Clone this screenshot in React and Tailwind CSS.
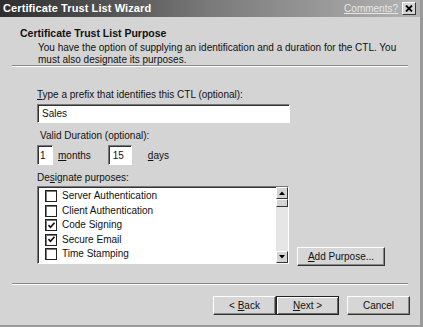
import React from "react";

const font = { fontFamily: '"Liberation Sans", Arial, sans-serif' };

function CheckBox({ checked }) {
  return (
    <span className="w-[12px] h-[12px] border border-[#222] shadow-[inset_1px_1px_0_#777] bg-white flex items-center justify-center shrink-0">
      {checked && (
        <svg width="9" height="9" viewBox="0 0 9 9">
          <path d="M1.5 4.2 L3.5 6.3 L7.5 1.8" stroke="#111" strokeWidth="1.7" fill="none" />
        </svg>
      )}
    </span>
  );
}

function Button({ children, def, className = "" }) {
  return (
    <div
      className={
        "h-[19px] flex items-center justify-center bg-[#d6d6d6] text-[10px] text-[#111] " +
        (def
          ? "border border-[#222] shadow-[inset_1px_1px_0_#fff,inset_-1px_-1px_0_#666] "
          : "border-t border-l border-t-[#fff] border-l-[#fff] border-r border-b border-r-[#333] border-b-[#333] shadow-[inset_-1px_-1px_0_#888] ") +
        className
      }
    >
      {children}
    </div>
  );
}

const sunken =
  "border-t border-l border-t-[#777] border-l-[#777] border-r border-b border-r-[#fff] border-b-[#fff] shadow-[inset_1px_1px_0_#333]";

export default function App() {
  const items = [
    ["Server Authentication", false],
    ["Client Authentication", false],
    ["Code Signing", true],
    ["Secure Email", true],
    ["Time Stamping", false],
    ["Microsoft Trust List Signing", false],
  ];
  return (
    <div
      className="w-[423px] h-[327px] bg-[#d4d4d4] flex flex-col overflow-hidden border-r-[3px] border-b-[2px] border-[#9a9a9a]"
      style={font}
    >
      <div className="h-[17px] shrink-0 flex items-center justify-between pl-[3px] pr-[4px] bg-gradient-to-r from-[#2e2e2e] via-[#7a7a7a] to-[#b4b4b4]">
        <span className="text-white font-bold text-[11px] tracking-[0.1px]">Certificate Trust List Wizard</span>
        <div className="flex items-center gap-[4px]">
          <span className="text-[10px] text-[#e8e8e8] underline">Comments?</span>
          <span className="w-[14px] h-[13px] bg-[#d4d4d4] border-t border-l border-white border-r border-b border-r-[#333] border-b-[#333] flex items-center justify-center">
            <svg width="8" height="7" viewBox="0 0 8 7">
              <path d="M1 0.5 L7 6.5 M7 0.5 L1 6.5" stroke="#000" strokeWidth="1.8" />
            </svg>
          </span>
        </div>
      </div>
      <div className="h-[48px] shrink-0 pt-[10px] pl-[20px]">
        <div className="font-bold text-[10.5px] text-[#111] leading-[12px]">Certificate Trust List Purpose</div>
        <div className="pl-[18px] pt-[3px] text-[10px] leading-[12px] text-[#111] w-[380px]">
          You have the option of supplying an identification and a duration for the CTL. You must also designate its purposes.
        </div>
      </div>
      <div className="mx-[12px] h-[2px] shrink-0 border-t border-[#888] border-b border-b-white" />
      <div className="flex-1 pl-[37px] pt-[22px] text-[10px] text-[#111] flex flex-col">
        <div className="leading-[12px]">
          <span className="underline">T</span>ype a prefix that identifies this CTL (optional):
        </div>
        <div className={"mt-[3px] w-[253px] h-[19px] bg-white flex items-center pl-[4px] " + sunken}>Sales</div>
        <div className="mt-[7px] pl-[3px] leading-[12px]">Valid Duration (optional):</div>
        <div className="mt-[3px] flex items-center">
          <div className={"w-[16px] h-[20px] bg-white flex items-center pl-[2px] " + sunken}>1</div>
          <span className="ml-[5px]"><span className="underline">m</span>onths</span>
          <div className={"ml-[17px] w-[24px] h-[20px] bg-white flex items-center pl-[4px] " + sunken}>15</div>
          <span className="ml-[16px]"><span className="underline">d</span>ays</span>
        </div>
        <div className="mt-[7px] leading-[12px]">
          De<span className="underline">s</span>ignate purposes:
        </div>
        <div className="mt-[2px] flex items-end">
          <div className={"w-[252px] h-[78px] bg-white flex overflow-hidden " + sunken}>
            <div className="flex-1 pt-[3px] pl-[7px] flex flex-col gap-[2.5px] overflow-hidden">
              {items.map(([t, c]) => (
                <div key={t} className="flex items-center gap-[5px] h-[12px] shrink-0">
                  <CheckBox checked={c} />
                  <span className="leading-[12px] whitespace-nowrap">{t}</span>
                </div>
              ))}
            </div>
            <div className="w-[12px] flex flex-col bg-[#e6e6e6]">
              <div className="h-[12px] bg-[#d4d4d4] border-t border-l border-white border-r border-b border-r-[#333] border-b-[#333] flex items-center justify-center">
                <svg width="6" height="4" viewBox="0 0 6 4"><path d="M0 4 L3 0.5 L6 4Z" fill="#000" /></svg>
              </div>
              <div className="h-[8px] bg-[#d4d4d4] border-t border-l border-white border-r border-b border-r-[#333] border-b-[#333]" />
              <div className="flex-1" />
              <div className="h-[12px] bg-[#d4d4d4] border-t border-l border-white border-r border-b border-r-[#333] border-b-[#333] flex items-center justify-center">
                <svg width="6" height="4" viewBox="0 0 6 4"><path d="M0 0 L3 3.5 L6 0Z" fill="#000" /></svg>
              </div>
            </div>
          </div>
          <Button className="ml-[8px] mb-[-2px] w-[88px]">
            <span><span className="underline">A</span>dd Purpose...</span>
          </Button>
        </div>
      </div>
      <div className="mx-[12px] h-[2px] shrink-0 border-t border-[#888] border-b border-b-white" />
      <div className="h-[40px] shrink-0 flex items-start justify-end pt-[11px] pr-[10px]">
        <Button className="w-[63px]">
          <span>&lt; <span className="underline">B</span>ack</span>
        </Button>
        <Button def className="w-[63px]">
          <span><span className="underline">N</span>ext &gt;</span>
        </Button>
        <Button className="ml-[8px] w-[63px]">Cancel</Button>
      </div>
    </div>
  );
}
